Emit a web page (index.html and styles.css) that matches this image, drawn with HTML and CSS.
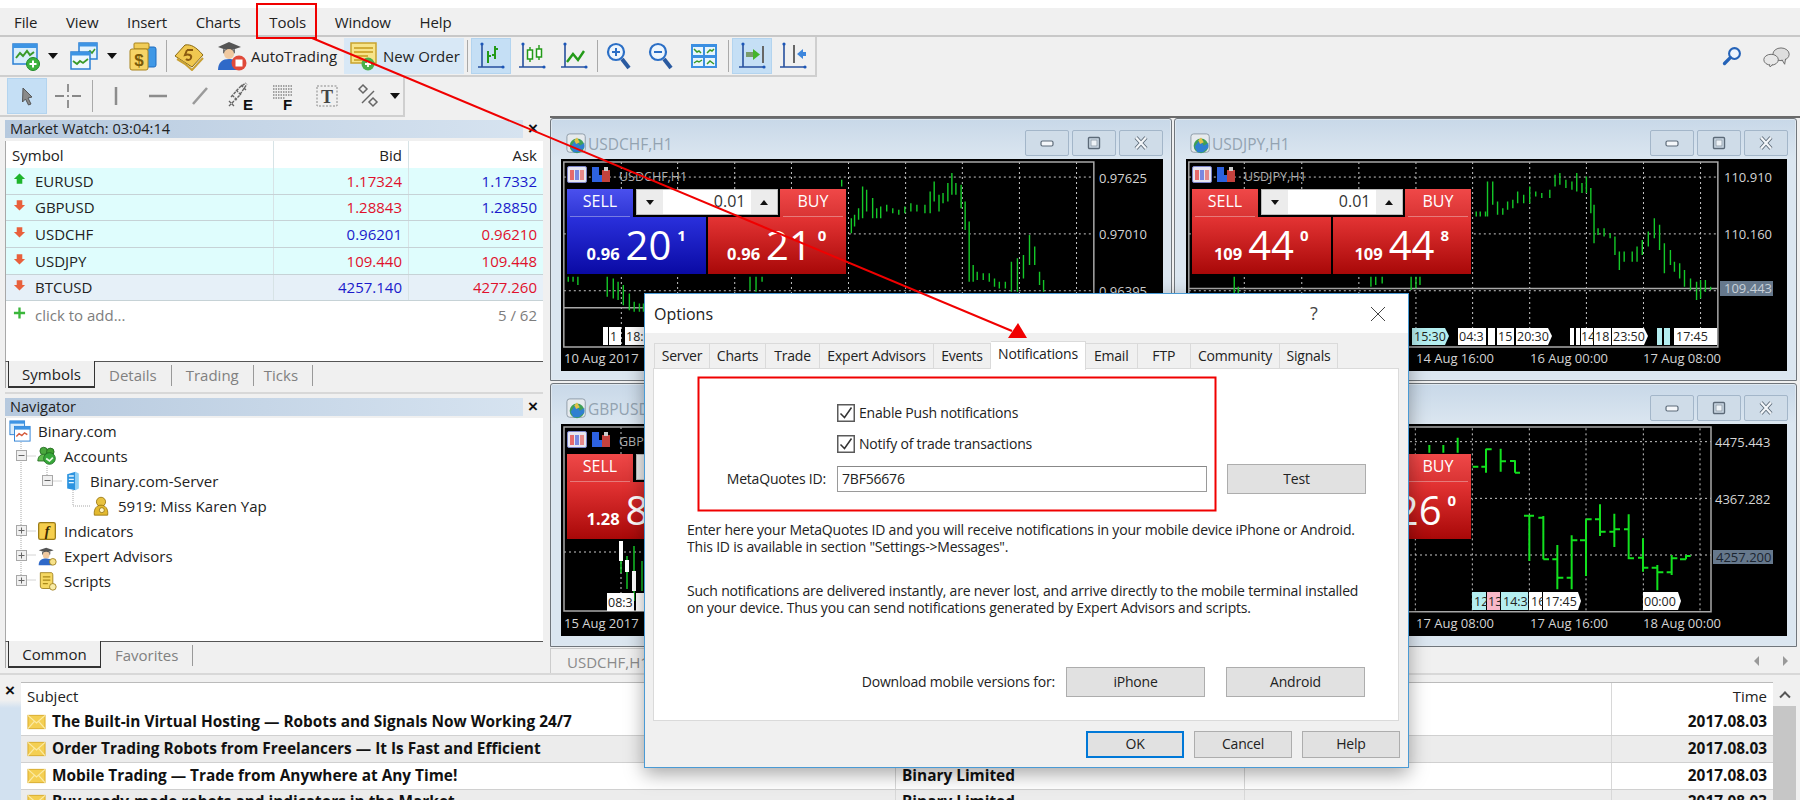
FILE: index.html
```html
<!DOCTYPE html>
<html lang="en">
<head>
<meta charset="utf-8">
<title>MetaTrader 4 - Options</title>
<link rel="stylesheet" href="styles.css">
</head>
<body>
<svg class="defs" aria-hidden="true">
  <defs>
    <symbol id="i-new" viewBox="0 0 30 30"><rect x="2" y="3" width="24" height="20" fill="#d9eefc" stroke="#2a7fd4" stroke-width="1.5"/><rect x="2" y="3" width="24" height="4" fill="#3d94e4"/><path d="M5 17l4-5 3 3 4-5 3 4 4-3" fill="none" stroke="#3a9a2a" stroke-width="2"/><circle cx="22" cy="23" r="6.5" fill="#3cb23c" stroke="#1f8a2a"/><path d="M22 19.5v7M18.500 23h7" stroke="#fff" stroke-width="2"/></symbol>
    <symbol id="i-prof" viewBox="0 0 30 30"><rect x="10" y="2" width="18" height="16" fill="#e4f3fd" stroke="#2a7fd4" stroke-width="1.500"/><rect x="10" y="2" width="18" height="3.500" fill="#3d94e4"/><path d="M18 13l3-3 2 2 3-4" fill="none" stroke="#3a9a2a" stroke-width="1.600"/><rect x="2" y="11" width="19" height="17" fill="#eef8fe" stroke="#2a7fd4" stroke-width="1.500"/><rect x="2" y="11" width="19" height="3.500" fill="#3d94e4"/><path d="M4 20l4 3 3-3 3 2 5-4" fill="none" stroke="#3a9a2a" stroke-width="1.800"/></symbol>
    <symbol id="i-dollar" viewBox="0 0 30 30"><rect x="11" y="6" width="17" height="20" rx="2" fill="#3f98e6" stroke="#1f6cc0"/><rect x="6" y="2" width="15" height="6" rx="1" fill="#f1cd58" stroke="#a9841c"/><rect x="2" y="8" width="18" height="21" rx="2" fill="#f6d466" stroke="#a9841c"/><text x="11" y="25" class="glyph-dollar">$</text></symbol>
    <symbol id="i-book" viewBox="0 0 30 30"><path d="M1 15L11 4c6-1 11 2 18 10l-11 12C12 22 7 19 1 15z" fill="#f0c850" stroke="#8a6a14"/><path d="M3 18c6 3 10 6 15 11l11-12" fill="none" stroke="#c9a032" stroke-width="2"/><path d="M13 9h6M13 9l-2 5c4-1 7 0 6 3s-4 2-5 1" fill="none" stroke="#8a5a10" stroke-width="2"/></symbol>
    <symbol id="i-hat" viewBox="0 0 30 30"><path d="M1 6l11-5 12 5-12 4z" fill="#555"/><path d="M6 8v4c3 2 9 2 12 0V8l-6 2z" fill="#6d6d6d"/><circle cx="12" cy="13" r="5" fill="#f0c9a0"/><path d="M1 29c0-8 5-11 11-11 4 0 8 1 9 4v7z" fill="#2f69c8"/><circle cx="22" cy="22" r="7.500" fill="#e04a3a"/><rect x="18.500" y="18.500" width="7" height="7" fill="#fff"/></symbol>
    <symbol id="i-order" viewBox="0 0 30 30"><rect x="2" y="2" width="25" height="20" fill="#f7e48a" stroke="#c9a22c" stroke-width="1.500"/><path d="M5 7h19M5 11h19M5 15h14M5 19h10" stroke="#c69a1c" stroke-width="1.500"/><circle cx="19" cy="23" r="6.500" fill="#4cb04a"/><path d="M19 20v6M16 23h6" stroke="#fff" stroke-width="1.800"/></symbol>
    <symbol id="i-axis" viewBox="0 0 30 30"><path d="M6 2v24M2 26h26" fill="none" stroke="#27509e" stroke-width="1.600"/><circle cx="6" cy="3" r="1.600" fill="#1b56b8"/><circle cx="27" cy="26" r="1.600" fill="#1b56b8"/></symbol>
    <symbol id="i-bars" viewBox="0 0 30 30"><use href="#i-axis"/><path d="M12 10v12M12 15h3M19 5v13M19 8h3M19 14h-3" fill="none" stroke="#239a18" stroke-width="2"/></symbol>
    <symbol id="i-cand" viewBox="0 0 30 30"><use href="#i-axis"/><path d="M13 6v15M22 4v15" stroke="#239a18" stroke-width="1.400"/><rect x="10.500" y="9" width="5" height="9" fill="#fff" stroke="#239a18" stroke-width="1.500"/><rect x="19.500" y="8" width="5" height="8" fill="#fff" stroke="#239a18" stroke-width="1.500"/></symbol>
    <symbol id="i-line" viewBox="0 0 30 30"><use href="#i-axis"/><path d="M9 20l6-8 5 6 6-9" transform="translate(-1 1)" fill="none" stroke="#239a18" stroke-width="2.400"/></symbol>
    <symbol id="i-zin" viewBox="0 0 30 30"><circle cx="12" cy="11" r="8" fill="#eef6fd" stroke="#2b6fc6" stroke-width="2.200"/><path d="M18 18l7 9" stroke="#2a5aa0" stroke-width="4"/><path d="M12 7v8M8 11h8" stroke="#2b6fc6" stroke-width="2"/></symbol>
    <symbol id="i-zout" viewBox="0 0 30 30"><circle cx="12" cy="11" r="8" fill="#eef6fd" stroke="#2b6fc6" stroke-width="2.200"/><path d="M18 18l7 9" stroke="#2a5aa0" stroke-width="4"/><path d="M8 11h8" stroke="#2b6fc6" stroke-width="2"/></symbol>
    <symbol id="i-tile" viewBox="0 0 30 30"><rect x="2" y="3" width="26" height="24" fill="#3b8fe2"/><rect x="4" y="6" width="10" height="8" fill="#e8f5fd"/><rect x="16" y="6" width="10" height="8" fill="#e8f5fd"/><rect x="4" y="17" width="10" height="8" fill="#e8f5fd"/><rect x="16" y="17" width="10" height="8" fill="#e8f5fd"/><path d="M5 8l3 3 2-1 2 2M18 12l3-3 2 1 2-2M5 22l3-2 2 1 3-2M18 23l3-3 4 3" fill="none" stroke="#3a9a2a" stroke-width="1.500"/></symbol>
    <symbol id="i-auto" viewBox="0 0 30 30"><use href="#i-axis"/><path d="M26 5v17" stroke="#666" stroke-width="2"/><rect x="9" y="11" width="8" height="5" fill="#7a9c6c"/><path d="M16 8l7 5.500-7 5.500z" fill="#45b42c"/></symbol>
    <symbol id="i-shift" viewBox="0 0 30 30"><use href="#i-axis"/><path d="M16 4v18" stroke="#666" stroke-width="2"/><path d="M19 13l6-5v3h3v4h-3v3z" fill="#3d86dc"/></symbol>
    <symbol id="i-cursor" viewBox="0 0 30 30"><path d="M11 7l9 9-4 1 3 6-2.500 1-3-6-3 3z" fill="#8a8a8a" stroke="#555"/></symbol>
    <symbol id="i-cross" viewBox="0 0 30 30"><path d="M15 3v8M15 19v8M2 15h9M19 15h9M15 14v2" fill="none" stroke="#888" stroke-width="1.800"/></symbol>
    <symbol id="i-v" viewBox="0 0 30 30"><path d="M15 6v18" stroke="#8c8c8c" stroke-width="2.500"/></symbol>
    <symbol id="i-h" viewBox="0 0 30 30"><path d="M6 15h18" stroke="#8c8c8c" stroke-width="2.500"/></symbol>
    <symbol id="i-t" viewBox="0 0 30 30"><path d="M8 23L22 7" stroke="#9a9a9a" stroke-width="2.500"/></symbol>
    <symbol id="i-fe" viewBox="0 0 30 30"><path d="M2 25l10-10 8-12M4 16l9-10 6-4M2 20l5 5M5 14l5 5M9 9l5 5M14 4l5 5" fill="none" stroke="#666" stroke-width="1.400" stroke-dasharray="3 1"/><text x="16" y="29" class="glyph-fib">E</text></symbol>
    <symbol id="i-ff" viewBox="0 0 30 30"><path d="M5 5h19M5 8h19M5 11h19M5 14h19M5 17h12" stroke="#888" stroke-width="1.300" stroke-dasharray="1.500 1"/><text x="15" y="29" class="glyph-fib">F</text></symbol>
    <symbol id="i-text" viewBox="0 0 30 30"><rect x="5" y="5" width="20" height="20" fill="none" stroke="#888" stroke-dasharray="2 1.500"/><text x="15" y="22" class="glyph-t">T</text></symbol>
    <symbol id="i-shapes" viewBox="0 0 30 30"><path d="M10 4l4 4-4 4-4-4zM20 17l4 4-4 4-4-4z" fill="none" stroke="#666" stroke-width="1.500"/><path d="M9 22l12-12" stroke="#666" stroke-width="1.500"/></symbol>
    <symbol id="i-search" viewBox="0 0 24 24"><circle cx="15" cy="9" r="6.500" fill="#eef5fd" stroke="#2563b8" stroke-width="2.500"/><path d="M10 14l-7 7" stroke="#2563b8" stroke-width="4" stroke-linecap="round"/></symbol>
    <symbol id="i-chat" viewBox="0 0 32 24"><ellipse cx="21" cy="9" rx="9" ry="7" fill="#dedede" stroke="#666"/><path d="M22 15l3 5 1-6" fill="#dedede" stroke="#666"/><ellipse cx="10" cy="15" rx="8" ry="6" fill="#e8e8e8" stroke="#666"/><path d="M8 20l1 3 3-3" fill="#e8e8e8" stroke="#666"/></symbol>
    <symbol id="i-up" viewBox="0 0 14 14"><path d="M7 1l6 6H10v5H4V7H1z" fill="#1fb52c"/></symbol>
    <symbol id="i-down" viewBox="0 0 14 14"><path d="M7 13l6-6H10V2H4v5H1z" fill="#e8603c"/></symbol>
    <symbol id="i-plus" viewBox="0 0 14 14"><path d="M7 1v12M1 7h12" stroke="#3ab63a" stroke-width="2.500"/></symbol>
    <symbol id="i-root" viewBox="0 0 24 24"><rect x="1" y="1" width="16" height="15" fill="#d8ecfb" stroke="#2a7fd4"/><rect x="1" y="1" width="16" height="3" fill="#3d94e4"/><rect x="6" y="7" width="17" height="16" fill="#fff" stroke="#2a7fd4"/><rect x="6" y="7" width="17" height="3.500" fill="#3d94e4"/><path d="M8 18l3-3 3 2 3-3 3 2" fill="none" stroke="#d45a3c" stroke-width="1.500"/></symbol>
    <symbol id="i-acc" viewBox="0 0 24 24"><circle cx="8" cy="6" r="4.500" fill="#4aa83e" stroke="#226a20"/><circle cx="16" cy="7" r="4.500" fill="#3fa030" stroke="#226a20"/><path d="M1 18c0-6 4-8 7-8s7 2 7 8z" fill="#5fbc4f" stroke="#226a20"/><circle cx="15" cy="15" r="7" fill="#37a83a" stroke="#1d6a1f"/><path d="M11 15l4 3 4-4" stroke="#e9f9e6" stroke-width="2" fill="none"/></symbol>
    <symbol id="i-srv" viewBox="0 0 24 24"><path d="M5 4l10-3v22l-10-2z" fill="#2d94e0"/><path d="M15 1l4 2v18l-4 2z" fill="#8fd0f5"/><path d="M7 6h6M7 10h6M7 14h6" stroke="#e8f6ff" stroke-width="1.600"/></symbol>
    <symbol id="i-user" viewBox="0 0 24 24"><circle cx="12" cy="7" r="5.500" fill="#e8c240" stroke="#96740f"/><path d="M4 23c-1-8 3-12 8-12s9 4 8 12z" fill="#e3b92f" stroke="#96740f"/><circle cx="13" cy="17" r="3" fill="#fff4c4" stroke="#96740f"/></symbol>
    <symbol id="i-f" viewBox="0 0 24 24"><rect x="2" y="2" width="20" height="20" rx="2" fill="#f6cf4d" stroke="#9a7a14" stroke-width="1.500"/><text x="12" y="18" class="glyph-f">f</text></symbol>
    <symbol id="i-ea" viewBox="0 0 24 24"><path d="M2 5l9-3 9 3-9 3z" fill="#555"/><path d="M6 7v3c2 2 8 2 10 0V7l-5 1z" fill="#6d6d6d"/><circle cx="11" cy="11" r="4" fill="#f0c9a0"/><path d="M2 23c0-6 4-8 9-8 3 0 6 1 7 3v5z" fill="#2f69c8"/><circle cx="19" cy="19" r="4" fill="#f7e28a" stroke="#9a7a14"/></symbol>
    <symbol id="i-scr" viewBox="0 0 24 24"><path d="M4 2h13c2 0 2 2 2 4v15H7c-2 0-3-1-3-3z" fill="#f6d862" stroke="#9a7a14"/><path d="M7 7h9M7 11h9M7 15h6" stroke="#a98818" stroke-width="1.500"/><circle cx="19" cy="19" r="4" fill="#f9eca8" stroke="#9a7a14"/></symbol>
    <symbol id="i-mail" viewBox="0 0 20 16"><rect x="1" y="1" width="18" height="14" fill="#f4cf52" stroke="#d9ab2a"/><path d="M1 1l9 8 9-8M1 15l7-8M19 15l-7-8" fill="none" stroke="#fbeaa4" stroke-width="1.300"/></symbol>
    <symbol id="i-mt" viewBox="0 0 24 24"><rect x="1" y="1" width="20" height="20" rx="3" fill="#e6eaee" stroke="#8b98a4"/><circle cx="12" cy="14" r="8" fill="#3f9f58"/><path d="M5 15l6-8 4 7 5-3v5l-6 5H8z" fill="#2f7fd0"/><path d="M9 8l3-3 3 5-4 2z" fill="#e3c24a"/></symbol>
    <symbol id="i-tbl" viewBox="0 0 20 17"><rect x="0.500" y="0.500" width="19" height="16" rx="1.500" fill="#e6e6f0" stroke="#7a83c8"/><path d="M3 4h4v10H3z" fill="#e66a6a"/><path d="M8 4h4v10H8z" fill="#7a88e0"/><path d="M13 4h4v10h-4z" fill="#e68a8a"/></symbol>
    <symbol id="i-sav" viewBox="0 0 20 17"><path d="M1 1h7v15H1z" fill="#2e62e0"/><path d="M4 9h8v7H4z" fill="#2e62e0"/><path d="M11 4h8v12h-8z" fill="#c4423e"/><path d="M13 1h4v4h-4z" fill="#cccccc"/></symbol>
    <symbol id="g-min" viewBox="0 0 20 14"><rect x="4" y="5" width="12" height="5" rx="1.500" fill="#f4f7fa" stroke="#5c6a78" stroke-width="1.200"/></symbol>
    <symbol id="g-max" viewBox="0 0 20 14"><rect x="4.500" y="1.500" width="11" height="11" rx="1" fill="none" stroke="#5c6a78" stroke-width="1.400"/><rect x="7" y="4" width="6" height="6" fill="#eef3f7" stroke="#8a97a4" stroke-width="0.800"/></symbol>
    <symbol id="g-cls" viewBox="0 0 20 14"><path d="M5 1.500L15 12.500M15 1.500L5 12.500" stroke="#5c6a78" stroke-width="4"/><path d="M5 1.500L15 12.500M15 1.500L5 12.500" stroke="#f4f7fa" stroke-width="2.200"/></symbol>
    <symbol id="g-box-m" viewBox="0 0 11 11"><rect x="0.500" y="0.500" width="10" height="10" fill="#f0f0f0" stroke="#a8a8a8"/><path d="M2.500 5.500h6" stroke="#666"/></symbol>
    <symbol id="g-box-p" viewBox="0 0 11 11"><rect x="0.500" y="0.500" width="10" height="10" fill="#f0f0f0" stroke="#a8a8a8"/><path d="M2.500 5.500h6M5.500 2.500v6" stroke="#666"/></symbol>
    <symbol id="g-chk" viewBox="0 0 18 18"><rect x="0.750" y="0.750" width="16.500" height="16.500" fill="#fff" stroke="#5a5a5a" stroke-width="1.500"/><path d="M3.500 9.500l4 4 7-10" fill="none" stroke="#333" stroke-width="1.500"/></symbol>
  </defs>
</svg>

<div class="topstrip"></div>
<nav class="menubar">
  <span>File</span><span>View</span><span>Insert</span><span>Charts</span><span>Tools</span><span>Window</span><span>Help</span>
</nav>

<div class="toolrow first">
  <div class="toolbar wide">
    <button class="tb"><svg class="ic"><use href="#i-new"/></svg></button>
    <button class="tb arrow"><i class="caret"></i></button>
    <button class="tb ml4"><svg class="ic"><use href="#i-prof"/></svg></button>
    <button class="tb arrow ml1"><i class="caret"></i></button>
    <button class="tb ml4"><svg class="ic"><use href="#i-dollar"/></svg></button>
    <i class="sep ml3"></i>
    <button class="tb ml2"><svg class="ic"><use href="#i-book"/></svg></button>
    <button class="tb txt auto ml4"><svg class="ic"><use href="#i-hat"/></svg><span>AutoTrading</span></button>
    <button class="tb txt order ml3"><svg class="ic"><use href="#i-order"/></svg><span>New Order</span></button>
    <i class="sep ml3"></i>
    <button class="tb on ml3"><svg class="ic"><use href="#i-bars"/></svg></button>
    <button class="tb ml1"><svg class="ic"><use href="#i-cand"/></svg></button>
    <button class="tb ml2"><svg class="ic"><use href="#i-line"/></svg></button>
    <i class="sep ml3"></i>
    <button class="tb ml1"><svg class="ic"><use href="#i-zin"/></svg></button>
    <button class="tb ml2"><svg class="ic"><use href="#i-zout"/></svg></button>
    <button class="tb ml3"><svg class="ic"><use href="#i-tile"/></svg></button>
    <i class="sep ml4"></i>
    <button class="tb on ml3"><svg class="ic"><use href="#i-auto"/></svg></button>
    <button class="tb ml1"><svg class="ic"><use href="#i-shift"/></svg></button>
  </div>
  <div class="rightIcons">
    <svg class="ic-s"><use href="#i-search"/></svg>
    <svg class="ic-c"><use href="#i-chat"/></svg>
  </div>
</div>
<div class="toolrow second">
  <div class="toolbar narrow">
    <button class="tb on"><svg class="ic"><use href="#i-cursor"/></svg></button>
    <button class="tb ml1"><svg class="ic"><use href="#i-cross"/></svg></button>
    <i class="sep ml4"></i>
    <button class="tb ml3"><svg class="ic"><use href="#i-v"/></svg></button>
    <button class="tb ml2"><svg class="ic"><use href="#i-h"/></svg></button>
    <button class="tb ml2"><svg class="ic"><use href="#i-t"/></svg></button>
    <button class="tb ml2"><svg class="ic"><use href="#i-fe"/></svg></button>
    <button class="tb ml1"><svg class="ic"><use href="#i-ff"/></svg></button>
    <button class="tb ml4"><svg class="ic"><use href="#i-text"/></svg></button>
    <button class="tb ml1"><svg class="ic"><use href="#i-shapes"/></svg></button>
    <button class="tb arrow"><i class="caret"></i></button>
  </div>
</div>

<div class="workspace">
  <aside class="leftcol">
    <section class="panel market">
      <header class="ptitle"><div class="ptitle-bar">Market Watch: 03:04:14</div><span class="px">×</span></header>
      <div class="pbody">
        <div class="mw-row mw-head"><span class="c-sym">Symbol</span><span class="c-num">Bid</span><span class="c-num">Ask</span></div>
        <div class="mw-row q"><span class="c-sym"><svg class="ar"><use href="#i-up"/></svg>EURUSD</span><span class="c-num red">1.17324</span><span class="c-num blue">1.17332</span></div>
        <div class="mw-row q"><span class="c-sym"><svg class="ar"><use href="#i-down"/></svg>GBPUSD</span><span class="c-num red">1.28843</span><span class="c-num blue">1.28850</span></div>
        <div class="mw-row q"><span class="c-sym"><svg class="ar"><use href="#i-down"/></svg>USDCHF</span><span class="c-num blue">0.96201</span><span class="c-num red">0.96210</span></div>
        <div class="mw-row q"><span class="c-sym"><svg class="ar"><use href="#i-down"/></svg>USDJPY</span><span class="c-num red">109.440</span><span class="c-num red">109.448</span></div>
        <div class="mw-row q alt"><span class="c-sym"><svg class="ar"><use href="#i-down"/></svg>BTCUSD</span><span class="c-num blue">4257.140</span><span class="c-num red">4277.260</span></div>
        <div class="mw-add"><span class="c-sym"><svg class="ar"><use href="#i-plus"/></svg>click to add...</span><span class="count">5 / 62</span></div>
      </div>
      <div class="ptabs"><span class="ptab active">Symbols</span><span class="ptab">Details</span><span class="ptab">Trading</span><span class="ptab">Ticks</span></div>
    </section>

    <section class="panel nav">
      <header class="ptitle"><div class="ptitle-bar">Navigator</div><span class="px">×</span></header>
      <div class="tree">
        <svg class="treelines" viewBox="6 418 537 223"><path d="M21 440V575M26.500 456H36M26.500 531H36M26.500 555H36M26.500 580H36M47 466V476M52.500 481H62M73 490V506H90"/></svg>
        <div class="node l0"><svg class="ni ni-lg"><use href="#i-root"/></svg><span>Binary.com</span></div>
        <div class="node l1"><svg class="bx"><use href="#g-box-m"/></svg><svg class="ni"><use href="#i-acc"/></svg><span>Accounts</span></div>
        <div class="node l2"><svg class="bx"><use href="#g-box-m"/></svg><svg class="ni"><use href="#i-srv"/></svg><span>Binary.com-Server</span></div>
        <div class="node l3"><svg class="ni"><use href="#i-user"/></svg><span>5919: Miss Karen Yap</span></div>
        <div class="node l1"><svg class="bx"><use href="#g-box-p"/></svg><svg class="ni"><use href="#i-f"/></svg><span>Indicators</span></div>
        <div class="node l1"><svg class="bx"><use href="#g-box-p"/></svg><svg class="ni"><use href="#i-ea"/></svg><span>Expert Advisors</span></div>
        <div class="node l1"><svg class="bx"><use href="#g-box-p"/></svg><svg class="ni"><use href="#i-scr"/></svg><span>Scripts</span></div>
      </div>
      <div class="ptabs"><span class="ptab active act2">Common</span><span class="ptab">Favorites</span></div>
    </section>
  </aside>

  <main class="rightcol">
    <div class="mdi">
      <!-- USDCHF -->
      <article class="win w1">
        <header class="wt"><svg class="wi"><use href="#i-mt"/></svg><span class="wname">USDCHF,H1</span><div class="wbtns"><b><svg><use href="#g-min"/></svg></b><b><svg><use href="#g-max"/></svg></b><b><svg><use href="#g-cls"/></svg></b></div></header>
        <div class="chart">
          <svg class="plot" viewBox="40 133 1497 634" preserveAspectRatio="none">
            <path class="grid" d="M190 142V695M330 142V695M472 142V695M613 142V695M755 142V695M897 142V695M1038 142V695M1180 142V695M1322 142V695M47 187H1365M47 357H1365M47 527H1365"/>
            <path class="frame" d="M47 142H1365V695H47zM47 578H1365"/>
            <path class="bars" d="M738 195V215M762 310V355M770 300V335M780 280V315M790 215V310M800 225V290M815 250V310M825 280V310M835 275V310M850 270V290M865 280V295M880 285V300M895 275V295M910 265V290M925 270V290M945 270V295M958 230V295M968 200V260M980 240V290M990 235V265M1002 205V260M1012 175V240M1022 205V240M1035 210V280M1045 260V345M1055 320V500M1065 450V500M1075 470V495M1090 475V495M1105 475V500M1118 490V515M1130 500V520M1145 500V520M1160 440V530M1175 430V530M1190 420V490M1205 360V450M1218 395V450M1230 470V510M1240 495V530M58 485V500M70 485V500M82 485V510M155 485V545M170 490V550M182 500V555M195 510V570M210 535V585M222 560V590M235 565V590M245 565V590M510 485V525M525 485V530M540 485V500"/>
          </svg>
          <svg class="axis" viewBox="561 159 602 212">
            <text x="1099" y="183">0.97625</text><text x="1099" y="239">0.97010</text><text x="1099" y="296">0.96395</text>
            <text x="564" y="363">10 Aug 2017</text>
            <rect class="tag" x="603" y="327" width="5" height="18"/><rect class="tag" x="609" y="327" width="12" height="18"/><rect class="tag" x="625" y="327" width="22" height="18"/>
            <text class="tt" x="610" y="341">1</text><text class="tt" x="626" y="341">18:</text>
          </svg>
          <div class="trade">
            <div class="tr-top"><svg class="tri"><use href="#i-tbl"/></svg><svg class="tri"><use href="#i-sav"/></svg><span>USDCHF,H1</span></div>
            <div class="tr-mid"><span class="act bluebtn">SELL</span><div class="lot"><b class="dn"></b><span>0.01</span><b class="up"></b></div><span class="act redbtn">BUY</span></div>
            <div class="tr-big"><div class="big bluebig"><small>0.96</small><em>20</em><sup>1</sup></div><div class="big redbig"><small>0.96</small><em>21</em><sup>0</sup></div></div>
          </div>
        </div>
      </article>
      <!-- USDJPY -->
      <article class="win w2">
        <header class="wt"><svg class="wi"><use href="#i-mt"/></svg><span class="wname">USDJPY,H1</span><div class="wbtns"><b><svg><use href="#g-min"/></svg></b><b><svg><use href="#g-max"/></svg></b><b><svg><use href="#g-cls"/></svg></b></div></header>
        <div class="chart">
          <svg class="plot" viewBox="40 133 1495 634" preserveAspectRatio="none">
            <path class="grid" d="M185 142V695M328 142V695M470 142V695M612 142V695M753 142V695M895 142V695M1036 142V695M1178 142V695M1320 142V695M47 187H1363M47 357H1363M47 527H1363"/>
            <path class="frame" d="M47 142H1363V695H47zM47 520H1363"/>
            <path class="bars" d="M762 290V305M772 290V305M785 290V305M790 200V305M803 200V270M815 260V300M828 280V300M840 260V285M853 255V280M865 230V265M880 240V265M895 215V265M910 230V245M925 235V250M945 225V250M958 180V215M970 175V210M985 195V220M1000 200V225M1012 175V230M1025 205V235M1036 185V235M1047 220V295M1055 270V385M1065 340V360M1080 340V365M1095 355V370M1107 365V420M1118 410V465M1130 410V440M1150 410V440M1162 395V440M1175 375V420M1190 350V395M1205 310V370M1218 330V405M1230 385V475M1245 405V450M1255 440V470M1268 445V490M1280 465V515M1295 490V525M1310 500V555M1320 495V550M1332 495V530M1345 515V525M160 485V540M170 515V560M500 485V515M512 485V510M528 485V505M600 485V525M612 485V520M622 485V510"/>
          </svg>
          <svg class="axis" viewBox="1186 159 601 212">
            <text x="1724" y="182">110.910</text><text x="1724" y="239">110.160</text>
            <rect class="ptag" x="1720" y="281" width="53" height="15"/><text class="ptt" x="1724" y="293">109.443</text>
            <text x="1416" y="363">14 Aug 16:00</text><text x="1530" y="363">16 Aug 00:00</text><text x="1643" y="363">17 Aug 08:00</text>
            <path class="tagc" d="M1412 328h33l4 8-4 9h-33z"/><text class="tt" x="1414" y="341">15:30</text>
            <rect class="tag" x="1458" y="328" width="28" height="17"/><text class="tt" x="1459" y="341">04:3</text>
            <rect class="tag" x="1488" y="328" width="7" height="17"/><rect class="tag" x="1497" y="328" width="17" height="17"/><text class="tt" x="1498" y="341">15</text>
            <path class="tag" d="M1516 328h32l4 8-4 9h-32z"/><text class="tt" x="1517" y="341">20:30</text>
            <rect class="tag" x="1570" y="328" width="4" height="17"/><rect class="tag" x="1576" y="328" width="4" height="17"/><rect class="tag" x="1581" y="328" width="12" height="17"/><text class="tt" x="1581" y="341">14</text>
            <rect class="tag" x="1594" y="328" width="17" height="17"/><text class="tt" x="1595" y="341">18</text>
            <path class="tag" d="M1612 328h32l4 8-4 9h-32z"/><text class="tt" x="1613" y="341">23:50</text>
            <rect class="tagc" x="1657" y="328" width="5" height="17"/><rect class="tagc" x="1664" y="328" width="6" height="17"/><rect class="tag" x="1674" y="328" width="43" height="17"/><text class="tt" x="1676" y="341">17:45</text>
          </svg>
          <div class="trade">
            <div class="tr-top"><svg class="tri"><use href="#i-tbl"/></svg><svg class="tri"><use href="#i-sav"/></svg><span>USDJPY,H1</span></div>
            <div class="tr-mid"><span class="act redbtn">SELL</span><div class="lot"><b class="dn"></b><span>0.01</span><b class="up"></b></div><span class="act redbtn">BUY</span></div>
            <div class="tr-big"><div class="big redbig"><small>109</small><em>44</em><sup>0</sup></div><div class="big redbig"><small>109</small><em>44</em><sup>8</sup></div></div>
          </div>
        </div>
      </article>
      <!-- GBPUSD -->
      <article class="win w3">
        <header class="wt"><svg class="wi"><use href="#i-mt"/></svg><span class="wname">GBPUSD,H1</span></header>
        <div class="chart">
          <svg class="axis" viewBox="561 423 602 212">
            <path class="grid2" d="M621 426V610M564 551H1100"/>
            <path class="frame2" d="M564 426H1095V610H564z"/>
            <path class="bars2" d="M621 540V572M627 555V588M634 545V600M642 560V590"/>
            <rect class="cand" x="619" y="540" width="4" height="20"/><rect class="cand" x="625" y="559" width="4" height="12"/><rect class="cand" x="632" y="570" width="4" height="20"/>
            <text x="564" y="627">15 Aug 2017</text>
            <rect class="tag" x="607" y="592" width="27" height="18"/><text class="tt" x="608" y="606">08:3</text>
            <rect class="tag" x="636" y="592" width="10" height="18"/>
          </svg>
          <div class="trade">
            <div class="tr-top"><svg class="tri"><use href="#i-tbl"/></svg><svg class="tri"><use href="#i-sav"/></svg><span>GBPUSD,H1</span></div>
            <div class="tr-mid"><span class="act redbtn">SELL</span><div class="lot"><b class="dn"></b><span>0.01</span><b class="up"></b></div><span class="act redbtn">BUY</span></div>
            <div class="tr-big"><div class="big redbig"><small>1.28</small><em>84</em><sup>3</sup></div><div class="big redbig"><small>1.28</small><em>85</em><sup>0</sup></div></div>
          </div>
        </div>
      </article>
      <!-- BTCUSD -->
      <article class="win w4">
        <header class="wt"><svg class="wi"><use href="#i-mt"/></svg><span class="wname">BTCUSD,H1</span><div class="wbtns"><b><svg><use href="#g-min"/></svg></b><b><svg><use href="#g-max"/></svg></b><b><svg><use href="#g-cls"/></svg></b></div></header>
        <div class="chart">
          <svg class="plot" viewBox="-642 129 1803 636" preserveAspectRatio="none">
            <path class="grid" d="M46 142V690M217 142V690M388 142V690M558 142V690M730 142V690M900 142V690M-600 182H933M-600 352H933M-600 522H933"/>
            <path class="frame" d="M-620 138H933V692H-620z"/>
            <path class="bars thick" d="M88 192V215M130 192V215M173 170V215M218 257H235M258 203V275M258 257H244M258 205H275M302 203V272M302 241H318M345 238V275M345 275H360M330 240H345M388 402V540M372 404H402M430 405V535M415 410H430M430 535H447M472 492V625M457 535H472M472 590H490M515 463V625M500 590H515M515 478H532M558 415V585M540 478H558M558 415H575M600 370V465M585 415H600M600 452H617M643 398V498M628 452H643M643 445H660M686 400V535M672 445H686M686 532H702M729 472V572M714 530H729M729 560H745M772 552V628M755 560H772M772 574H790M815 522V582M800 574H815M815 532H832M858 522V535M840 535H858M858 525H872"/>
          </svg>
          <svg class="axis" viewBox="1186 423 601 212">
            <text x="1715" y="446">4475.443</text><text x="1715" y="503">4367.282</text>
            <rect class="ptag" x="1713" y="549" width="60" height="14"/><text class="ptt dark" x="1716" y="561">4257.200</text>
            <text x="1416" y="627">17 Aug 08:00</text><text x="1530" y="627">17 Aug 16:00</text><text x="1643" y="627">18 Aug 00:00</text>
            <rect class="tagc" x="1472" y="591" width="14" height="18"/><text class="tt" x="1474" y="605">12</text>
            <rect class="tagp" x="1487" y="591" width="13" height="18"/><text class="tt" x="1488" y="605">13</text>
            <rect class="tagc" x="1501" y="591" width="27" height="18"/><text class="tt" x="1503" y="605">14:3</text>
            <rect class="tag" x="1529" y="591" width="13" height="18"/><text class="tt" x="1531" y="605">16</text>
            <path class="tag" d="M1543 591h35l3 9-3 9h-35z"/><text class="tt" x="1545" y="605">17:45</text>
            <path class="tag" d="M1643 591h35l3 9-3 9h-35z"/><text class="tt" x="1644" y="605">00:00</text>
          </svg>
          <div class="trade">
            <div class="tr-top"><svg class="tri"><use href="#i-tbl"/></svg><svg class="tri"><use href="#i-sav"/></svg><span>BTCUSD,H1</span></div>
            <div class="tr-mid"><span class="act redbtn">SELL</span><div class="lot"><b class="dn"></b><span>0.01</span><b class="up"></b></div><span class="act redbtn">BUY</span></div>
            <div class="tr-big"><div class="big redbig"><small>4257.</small><em>14</em><sup>0</sup></div><div class="big redbig"><small>4277.</small><em>26</em><sup>0</sup></div></div>
          </div>
        </div>
      </article>
    </div>
    <div class="mditabs"><span class="mditab">USDCHF,H1</span><span class="scr"><i class="sl"></i><i class="sr"></i></span></div>
  </main>
</div>

<section class="terminal">
  <div class="term-left"><span class="px">×</span></div>
  <div class="mail">
    <div class="mrow mhead"><span>Subject</span><span></span><span></span><span class="tm">Time</span></div>
    <div class="mrow"><span class="subj"><svg class="env"><use href="#i-mail"/></svg>The Built-in Virtual Hosting — Robots and Signals Now Working 24/7</span><span>Binary Limited</span><span></span><span class="tm">2017.08.03</span></div>
    <div class="mrow shade"><span class="subj"><svg class="env"><use href="#i-mail"/></svg>Order Trading Robots from Freelancers — It Is Fast and Efficient</span><span>Binary Limited</span><span></span><span class="tm">2017.08.03</span></div>
    <div class="mrow"><span class="subj"><svg class="env"><use href="#i-mail"/></svg>Mobile Trading — Trade from Anywhere at Any Time!</span><span>Binary Limited</span><span></span><span class="tm">2017.08.03</span></div>
    <div class="mrow shade"><span class="subj"><svg class="env"><use href="#i-mail"/></svg>Buy ready-made robots and indicators in the Market</span><span>Binary Limited</span><span></span><span class="tm">2017.08.03</span></div>
  </div>
  <div class="vscroll"><div class="vup"><i></i></div><div class="vtrack"></div></div>
</section>

<div class="dialog">
  <header class="dlg-title"><span>Options</span><em>?</em><svg class="dlg-x" viewBox="0 0 16 16"><path d="M1 1l14 14M15 1L1 15"/></svg></header>
  <div class="dlg-tabs">
    <span>Server</span><span>Charts</span><span>Trade</span><span>Expert Advisors</span><span>Events</span><span class="sel">Notifications</span><span>Email</span><span>FTP</span><span>Community</span><span>Signals</span>
  </div>
  <div class="dlg-pane">
    <div class="form">
      <span></span><label class="chk"><svg><use href="#g-chk"/></svg>Enable Push notifications</label><span></span><span></span>
      <span></span><label class="chk"><svg><use href="#g-chk"/></svg>Notify of trade transactions</label><span></span><span></span>
      <span class="flabel">MetaQuotes ID:</span><div class="finput">7BF56676</div><span></span><button class="btn">Test</button>
    </div>
    <p class="para first-p">Enter here your MetaQuotes ID and you will receive notifications in your mobile device iPhone or Android.<br>This ID is available in section "Settings-&gt;Messages".</p>
    <p class="para">Such notifications are delivered instantly, are never lost, and arrive directly to the mobile terminal installed<br>on your device. Thus you can send notifications generated by Expert Advisors and scripts.</p>
    <div class="dl"><span>Download mobile versions for:</span><button class="btn">iPhone</button><button class="btn">Android</button></div>
  </div>
  <footer class="dlg-foot"><button class="fbtn def">OK</button><button class="fbtn">Cancel</button><button class="fbtn">Help</button></footer>
</div>

<svg class="annot" viewBox="0 0 1800 800" aria-hidden="true">
  <rect x="257" y="4" width="59" height="34"/>
  <rect x="698.500" y="377.500" width="517" height="133"/>
  <path d="M312 38L1012 331"/>
  <polygon points="1018,323 1027,338 1008,338"/>
</svg>
</body>
</html>
```
FILE: styles.css
```css
* { box-sizing: border-box; }
html, body { margin: 0; padding: 0; }
body {
  width: 1800px; height: 800px; overflow: hidden; position: relative;
  background: #f0f0f0; color: #222;
  font: 15px/1.2 "Open Sans", "Noto Sans", sans-serif;
}
.defs { position: absolute; width: 0; height: 0; }
.glyph-dollar { font: bold 17px "Liberation Sans", sans-serif; fill: #7a5a08; text-anchor: middle; }
.glyph-fib { font: bold 15px "Liberation Sans", sans-serif; fill: #111; }
.glyph-t { font: bold 18px "Liberation Serif", serif; fill: #444; text-anchor: middle; }
.glyph-f { font: italic bold 17px "Liberation Serif", serif; fill: #3a2a00; text-anchor: middle; }

.topstrip { height: 8px; background: #fff; }
.menubar { height: 27px; display: flex; align-items: center; gap: 28.7px; padding-left: 14px; background: #f0f0f0; font-size: 15px; letter-spacing: -0.1px; }

.toolrow { display: flex; border-top: 2px solid #c8c8c8; background: #f0f0f0; }
.toolrow.first { height: 42px; }
.toolrow.second { height: 40px; border-top: 0; }
.toolbar { display: flex; align-items: center; padding-left: 6px; border-right: 2px solid #cfcfcf; border-bottom: 2px solid #cfcfcf; background: #f0f0f0; }
.toolbar.wide { width: 817px; height: 40px; }
.toolbar.narrow { width: 405px; height: 40px; padding-left: 7px; }
.tb { width: 40px; height: 36px; padding: 0; border: 0; background: transparent; display: flex; align-items: center; justify-content: center; font: inherit; color: #222; flex: none; }
.tb.on { background: #c5dff5; border: 1px solid #b3d4ef; }
.tb.arrow { width: 14px; }
.tb.txt { justify-content: flex-start; gap: 4px; padding-left: 4px; font-size: 15px; white-space: nowrap; }
.tb.auto { width: 128px; }
.tb.order { width: 120px; padding-left: 5px; background: #d8e8f6; }
.ic { width: 30px; height: 30px; flex: none; }
.tb.txt .ic { width: 30px; }
.caret { width: 0; height: 0; border: 5px solid transparent; border-top: 6px solid #111; border-bottom: 0; }
.sep { width: 1px; height: 32px; background: #a9a9a9; flex: none; }
.ml1 { margin-left: 1px; } .ml2 { margin-left: 2px; } .ml3 { margin-left: 3px; } .ml4 { margin-left: 4px; }
.rightIcons { margin-left: auto; display: flex; align-items: flex-start; gap: 20px; padding: 9px 9px 0 0; }
.ic-s { width: 20px; height: 20px; }
.ic-c { width: 29px; height: 22px; }

.workspace { display: flex; height: 556px; }
.leftcol { width: 550px; flex: none; padding: 3px 0 0 5px; }
.panel { width: 538px; display: flex; flex-direction: column; }
.panel.market { height: 274px; margin-bottom: 4px; border-bottom: 2px solid #d8d8d8; }
.panel.nav { height: 275px; padding-bottom: 5px; }
.ptitle { height: 18px; display: flex; flex: none; }
.ptitle-bar { width: 518px; padding-left: 5px; line-height: 16px; font-size: 14.6px; background: linear-gradient(90deg, #b6c9de, #d6e3f0); color: #222; }
.px { width: 20px; text-align: center; font: bold 17px/18px "Liberation Sans", sans-serif; color: #111; }
.pbody { flex: none; height: 220px; margin-top: 3px; background: #fff; border-left: 1px solid #a8a8a8; }
.mw-row { display: grid; grid-template-columns: 268px 135px 134px; height: 26.67px; align-items: stretch; }
.mw-row > span { display: flex; align-items: center; border-right: 1px solid #d7e3e6; }
.mw-row > span:last-child { border-right: 0; }
.mw-head { height: 27px; }
.c-sym { padding-left: 6px; white-space: nowrap; }
.c-num { justify-content: flex-end; padding-right: 6px; }
.q { background: #dffdfd; border-bottom: 1px solid #c6d2d6; }
.q.alt { background: #e6f0f8; }
.q .c-sym, .mw-add .c-sym { padding-left: 7px; }
.ar { width: 13px; height: 14px; margin-right: 9px; flex: none; margin-top: -4px; }
.red { color: #e0102c; } .blue { color: #1a1acb; }
.mw-add { height: 27px; display: flex; justify-content: space-between; align-items: center; color: #7d7d7d; }
.mw-add .c-sym { display: flex; align-items: center; }
.count { padding-right: 6px; }

.ptabs { height: 27px; flex: none; display: flex; align-items: center; padding-left: 2px; background: #f0f0f0; border-top: 1px solid #555; border-left: 1px solid #a8a8a8; }
.ptab { height: 21px; padding: 0 14px; border-right: 1px solid #999; color: #808080; line-height: 21px; }
.ptab + .ptab + .ptab + .ptab { padding-left: 10px; }
.ptab.active { height: 27px; margin-top: -1px; width: 87px; padding: 0; text-align: center; line-height: 27px; color: #222; border: 1px solid #333; border-top: 0; border-bottom-width: 2px; background: #f0f0f0; }
.ptab.act2 { width: 93px; }
.tree { position: relative; flex: none; height: 223px; margin-top: 2px; background: #fff; border-left: 1px solid #a8a8a8; }
.treelines { position: absolute; inset: 0; width: 537px; height: 223px; }
.treelines path { fill: none; stroke: #a8a8a8; stroke-dasharray: 1 1; }
.node { position: relative; height: 25px; display: flex; align-items: center; white-space: nowrap; }
.node.l0 { padding-left: 3px; }
.node.l1 { padding-left: 9.5px; }
.node.l2 { padding-left: 35.5px; }
.node.l3 { padding-left: 85px; }
.bx { width: 11px; height: 11px; margin-right: 10.5px; flex: none; }
.ni { width: 20px; height: 20px; margin-right: 7px; flex: none; }
.ni-lg { width: 22px; height: 22px; margin-right: 7px; }

.rightcol { width: 1250px; display: flex; flex-direction: column; }
.mdi { position: relative; height: 531px; flex: none; border-top: 2px solid #6a6a6a; margin-top: -1px; }
.win { position: absolute; background: linear-gradient(#c8d8e8 0, #dbe6f0 40px); border: 1px solid #70767c; border-radius: 3px 3px 0 0; display: flex; flex-direction: column; box-shadow: inset 0 0 0 1px #dfe8f0; }
.w1 { left: 0; top: 0; width: 622px; height: 263px; }
.w2 { left: 624px; top: 0; width: 623px; height: 263px; }
.w3 { left: 0; top: 265px; width: 622px; height: 264px; }
.w4 { left: 624px; top: 265px; width: 623px; height: 264px; }
.wt { height: 40px; flex: none; display: flex; align-items: center; padding: 10px 0 0 15px; color: #93a3b1; font-size: 15.5px; }
.wi { width: 22px; height: 22px; margin-right: 0; flex: none; }
.wname { flex: 1; }
.wbtns { display: flex; gap: 3px; padding-right: 8px; margin-top: -3px; }
.wbtns b { width: 44px; height: 26px; border: 1px solid #a3b6c9; border-radius: 2px; background: #cfdce8; display: flex; align-items: center; justify-content: center; }
.wbtns svg { width: 20px; height: 14px; }
.chart { position: relative; margin-left: 10px; width: 602px; height: 212px; background: #000; flex: none; overflow: hidden; }
.w2 .chart, .w4 .chart { margin-left: 11px; width: 601px; }
.plot, .axis { position: absolute; inset: 0; width: 100%; height: 100%; }
.plot path { vector-effect: non-scaling-stroke; fill: none; }
.grid { stroke: #c8c8c8; stroke-dasharray: 2 3; }
.frame { stroke: #a8a8a8; stroke-width: 1.5; }
.bars { stroke: #14c828; stroke-width: 1.4; }
.bars.thick { stroke: #12e01e; stroke-width: 2; }
.grid2 { fill: none; stroke: #c8c8c8; stroke-dasharray: 2 3; }
.frame2 { fill: none; stroke: #a8a8a8; stroke-width: 1.5; }
.bars2 { fill: none; stroke: #14c828; stroke-width: 1.5; }
.cand { fill: #fff; }
.axis text { font: 13px "Open Sans", sans-serif; fill: #d4d4d4; }
.axis .tt { fill: #222; font-size: 12.5px; }
.axis .ptt { fill: #c8d0d8; }
.axis .ptt.dark { fill: #1a2430; }
.tag { fill: #fff; }
.tagc { fill: #b4eef0; }
.tagp { fill: #f8b8c8; }
.ptag { fill: #66788c; }

.trade { position: absolute; left: 6px; top: 7px; width: 279px; color: #fff; }
.tr-top { height: 23px; display: flex; align-items: flex-start; gap: 4px; font-size: 12.5px; color: #b0b0b0; }
.tr-top span { margin: 3px 0 0 4px; }
.tri { width: 20px; height: 17px; flex: none; }
.tr-mid { display: flex; height: 28px; justify-content: space-between; align-items: flex-start; }
.act { width: 66px; height: 28px; display: block; text-align: center; line-height: 25px; font-size: 16px; position: relative; }
.act::after { content: ""; position: absolute; left: 3px; right: 3px; bottom: 0; height: 1px; background: rgba(255,255,255,.35); }
.bluebtn { background: linear-gradient(#4a50ee, #2f36d4); }
.redbtn { background: linear-gradient(#f04848, #d93434); }
.lot { width: 142px; height: 26px; display: flex; background: #fff; color: #333; border: 1px solid #bbb; align-items: center; font-size: 16px; }
.lot span { flex: 1; text-align: right; padding-right: 5px; }
.lot b { width: 26px; height: 24px; background: #ececec; display: flex; align-items: center; justify-content: center; }
.dn::after { content: ""; border: 4px solid transparent; border-top: 5px solid #111; border-bottom: 0; }
.up::after { content: ""; border: 4px solid transparent; border-bottom: 5px solid #111; border-top: 0; }
.tr-big { display: flex; gap: 2px; height: 57px; }
.big { flex: 1; display: flex; justify-content: center; align-items: flex-end; position: relative; padding-bottom: 9px; line-height: 1; }
.big small { font-size: 16.5px; font-weight: 700; margin-right: 6px; margin-bottom: 3px; }
.big em { font-style: normal; font-size: 40px; }
.big sup { font-size: 15px; font-weight: 700; align-self: flex-start; margin: 11px 0 0 6px; }
.bluebig { background: linear-gradient(#2a30dc, #0a0aa4); }
.redbig { background: linear-gradient(#e43434, #a80808); }

.mditabs { height: 26px; flex: none; display: flex; justify-content: space-between; align-items: center; margin-top: 1px; }
.mditab { height: 26px; padding: 4px 0 0 16px; width: 130px; border-left: 1px solid #ccc; border-top: 1px solid #ccc; color: #8a8a8a; font-size: 15px; }
.scr { display: flex; gap: 24px; padding-right: 12px; }
.sl, .sr { width: 0; height: 0; border: 5px solid transparent; }
.sl { border-right: 5px solid #999; border-left: 0; }
.sr { border-left: 5px solid #999; border-right: 0; }

.terminal { position: absolute; left: 0; top: 673px; width: 1800px; height: 127px; display: flex; border-top: 2px solid #d8d8d8; background: #f0f0f0; overflow: hidden; }
.term-left { width: 21px; flex: none; margin-top: 7px; background: linear-gradient(#f0f0f0 18px, #d2e1f0 26px); }
.term-left .px { display: block; }
.mail { width: 1752px; flex: none; margin-top: 7px; background: #fff; border-top: 1px solid #bbb; }
.mrow { display: grid; grid-template-columns: 875px 349px 367px 161px; height: 26.67px; align-items: center; font-weight: 700; font-size: 15.4px; color: #111; border-bottom: 1px solid #d0d0d0; }
.mrow > span { height: 100%; display: flex; align-items: center; padding-left: 6px; border-right: 1px solid #d8d8d8; white-space: nowrap; }
.mrow > span:last-child { border-right: 0; }
.mhead { font-weight: 400; border-bottom: 0; color: #222; font-size: 15px; }
.mhead > span { border-right-color: transparent; }
.mhead > span:nth-child(3) { border-right-color: #d8d8d8; }
.shade { background: #ececec; }
.mrow .subj { padding-left: 6px; }
.env { width: 19px; height: 16px; margin-right: 6px; flex: none; }
.mrow .tm { justify-content: flex-end; padding: 0 6px 0 0; }
.vscroll { width: 23px; flex: none; margin-top: 7px; }
.vup { height: 24px; background: #f0f0f0; display: flex; align-items: center; justify-content: center; }
.vup i { width: 8px; height: 8px; border-left: 2px solid #555; border-top: 2px solid #555; transform: rotate(45deg) translate(2px,2px); }
.vtrack { height: 100px; background: #c6c6c6; }

.dialog { position: absolute; left: 644px; top: 293px; width: 765px; height: 475px; background: #f0f0f0; border: 1px solid #4a9ad4; box-shadow: 0 6px 18px rgba(0,0,0,.35); display: flex; flex-direction: column; font-size: 14px; letter-spacing: -0.2px; color: #222; }
.dlg-title { height: 39px; flex: none; background: #fff; display: flex; align-items: center; padding-left: 9px; font-size: 16px; position: relative; letter-spacing: 0; }
.dlg-title span { flex: 1; margin-top: 2px; }
.dlg-title em { font-style: normal; font-size: 18px; width: 20px; margin-right: 40px; color: #444; }
.dlg-x { width: 16px; height: 16px; margin-right: 22px; fill: none; stroke: #444; }
.dlg-tabs { display: grid; grid-template-columns: 56px 56px 54px 114px 57px 95px 51.500px 53.500px 89px 58px; height: 26px; margin: 10px 0 0 9px; flex: none; font-size: 14px; }
.dlg-tabs span { background: #f0f0f0; border: 1px solid #dadada; border-left-width: 0; display: flex; align-items: center; justify-content: center; white-space: nowrap; }
.dlg-tabs span:first-child { border-left-width: 1px; }
.dlg-tabs .sel { background: #fff; border-bottom: 0; margin-top: -2px; height: 29px; z-index: 1; padding-bottom: 3px; }
.dlg-pane { flex: none; margin: -1px 9px 0 8px; height: 353px; background: #fff; border: 1px solid #dadada; display: flex; flex-direction: column; }
.form { display: grid; grid-template-columns: 183px 370px 20px 139px; grid-template-rows: 18px 18px 26px; row-gap: 13px; padding-top: 35px; align-items: center; }
.chk { display: flex; align-items: center; gap: 4px; white-space: nowrap; }
.chk svg { width: 18px; height: 18px; flex: none; }
.flabel { text-align: right; padding-right: 11px; white-space: nowrap; }
.finput { height: 26px; border: 1px solid #9a9a9a; border-top-color: #888; background: #fff; padding-left: 4px; line-height: 24px; margin-top: -1px; }
.btn { height: 30px; width: 139px; border: 1px solid #adadad; background: #e1e1e1; font: inherit; letter-spacing: inherit; color: #222; }
.form .btn { margin-top: 0; }
.para { margin: 0 0 27px 33px; line-height: 17px; white-space: nowrap; }
.para.first-p { margin-top: 29px; }
.dl { margin-top: 24px; display: flex; align-items: center; justify-content: flex-end; padding-right: 33px; }
.dl span { margin-right: 11px; }
.dl .btn + .btn { margin-left: 21px; }
.dlg-foot { flex: 1; display: flex; justify-content: flex-end; align-items: flex-start; gap: 10px; padding: 10px 8px 0 0; }
.fbtn { width: 98px; height: 27px; border: 1px solid #adadad; background: #e1e1e1; font: inherit; letter-spacing: inherit; color: #222; }
.fbtn.def { border: 2px solid #0078d7; }

.annot { position: absolute; left: 0; top: 0; width: 1800px; height: 800px; pointer-events: none; }
.annot rect { fill: none; stroke: #f00000; stroke-width: 2; }
.annot path { fill: none; stroke: #f00000; stroke-width: 2; }
.annot polygon { fill: #f00000; }
```
